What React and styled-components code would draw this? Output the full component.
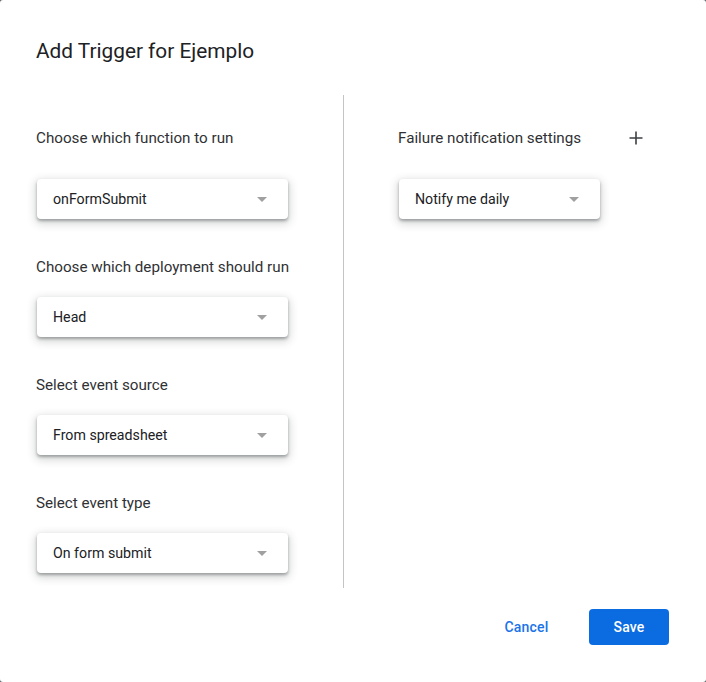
import React from 'react';
import styled, { createGlobalStyle } from 'styled-components';

const GlobalStyle = createGlobalStyle`
  html, body {
    margin: 0;
    padding: 0;
    background: #5f6368;
  }
  body {
    font-family: Roboto, "Liberation Sans", Arial, sans-serif;
    -webkit-font-smoothing: antialiased;
  }
`;

const Dialog = styled.div`
  width: 706px;
  height: 682px;
  box-sizing: border-box;
  background: #fff;
  border-radius: 3px;
  padding: 38px 37px 0 36px;
  display: flex;
  flex-direction: column;
`;

const Title = styled.h1`
  margin: 0;
  font-size: 20.8px;
  line-height: 26px;
  font-weight: 400;
  color: #202124;
`;

const Body = styled.div`
  margin-top: 31px;
  height: 493px;
  flex-shrink: 0;
  display: flex;
`;

const Column = styled.div`
  display: flex;
  flex-direction: column;
  align-items: flex-start;
  padding-top: 33px;
`;

const LeftColumn = styled(Column)`
  width: 307px;
  border-right: 1px solid #c4c4c4;
`;

const RightColumn = styled(Column)`
  padding-left: 54px;
`;

const Label = styled.div`
  flex-shrink: 0;
  font-size: 15.2px;
  line-height: 20px;
  color: #2f3134;
  margin-bottom: ${(p) => (p.$first ? '31px' : '20px')};
`;

const HeaderRow = styled.div`
  width: 250px;
  display: flex;
  align-items: flex-start;
  justify-content: space-between;
`;

const IconButton = styled.button`
  width: 24px;
  height: 20px;
  padding: 0;
  border: none;
  background: none;
  display: flex;
  align-items: center;
  justify-content: center;
  color: #3c4043;
`;

const Select = styled.div`
  flex-shrink: 0;
  width: ${(p) => p.$width}px;
  height: 40px;
  box-sizing: border-box;
  padding: 0 21px 0 16px;
  margin: 0 0 38px 1px;
  border-radius: 4px;
  background: #fff;
  box-shadow: 0 2px 3px rgba(60, 64, 67, 0.4), 0 3px 8px 2px rgba(60, 64, 67, 0.2);
  display: flex;
  align-items: center;
  justify-content: space-between;
  font-size: 14.2px;
  color: #202124;
`;

const Arrow = styled.span`
  width: 0;
  height: 0;
  border-left: 5px solid transparent;
  border-right: 5px solid transparent;
  border-top: 5px solid #a0a0a0;
`;

const Footer = styled.div`
  margin-top: 21px;
  display: flex;
  justify-content: flex-end;
  gap: 24px;
`;

const Button = styled.button`
  height: 36px;
  min-width: ${(p) => (p.$primary ? '80px' : '77px')};
  border: none;
  border-radius: 4px;
  padding: 0 16px;
  font-family: Roboto, "Liberation Sans", Arial, sans-serif;
  font-size: 14px;
  font-weight: 500;
  letter-spacing: 0.2px;
  background: ${(p) => (p.$primary ? '#0b6be0' : 'transparent')};
  color: ${(p) => (p.$primary ? '#fff' : '#1a73e8')};
`;

const PlusIcon = () => (
  <svg width="14" height="14" viewBox="0 0 14 14">
    <path d="M7 0.5v13M0.5 7h13" stroke="currentColor" strokeWidth="1.6" fill="none" />
  </svg>
);

const Dropdown = ({ value, width }) => (
  <Select $width={width}>
    <span>{value}</span>
    <Arrow />
  </Select>
);

const fields = [
  { label: 'Choose which function to run', value: 'onFormSubmit' },
  { label: 'Choose which deployment should run', value: 'Head' },
  { label: 'Select event source', value: 'From spreadsheet' },
  { label: 'Select event type', value: 'On form submit' },
];

export default function App() {
  return (
    <>
      <GlobalStyle />
      <Dialog>
        <Title>Add Trigger for Ejemplo</Title>
        <Body>
          <LeftColumn>
            {fields.map((f, i) => (
              <React.Fragment key={f.label}>
                <Label $first={i === 0}>{f.label}</Label>
                <Dropdown value={f.value} width={251} />
              </React.Fragment>
            ))}
          </LeftColumn>
          <RightColumn>
            <HeaderRow>
              <Label $first>Failure notification settings</Label>
              <IconButton>
                <PlusIcon />
              </IconButton>
            </HeaderRow>
            <Dropdown value="Notify me daily" width={201} />
          </RightColumn>
        </Body>
        <Footer>
          <Button>Cancel</Button>
          <Button $primary>Save</Button>
        </Footer>
      </Dialog>
    </>
  );
}
